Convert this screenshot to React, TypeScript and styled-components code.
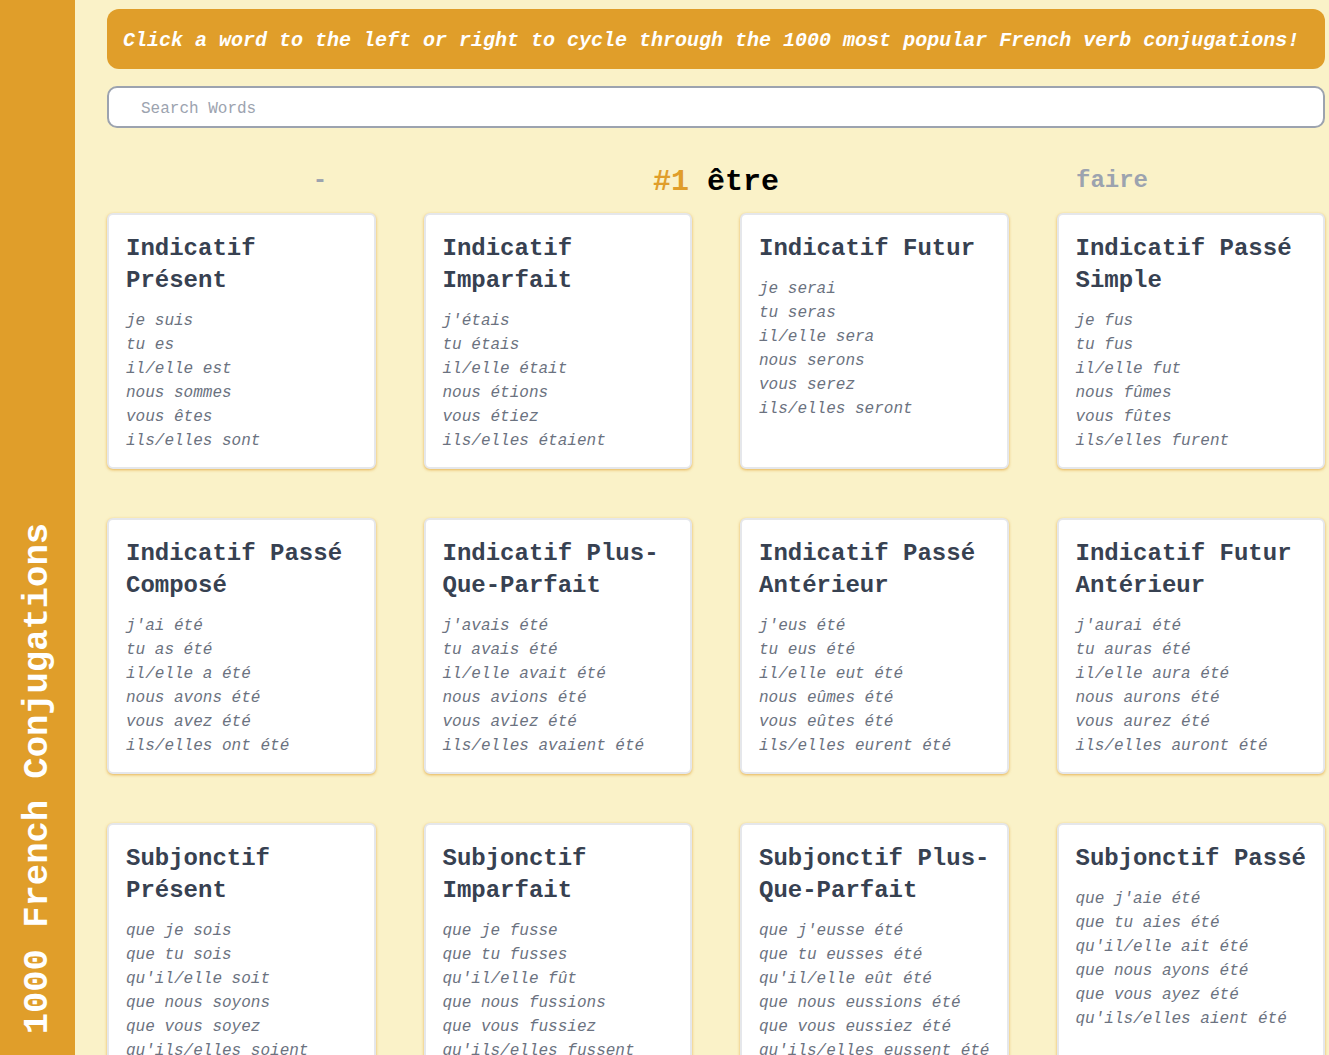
import React from "react";
import styled, { createGlobalStyle } from "styled-components";

const Global = createGlobalStyle`
  html, body { margin: 0; padding: 0; overflow: hidden; }
  body { font-family: "Liberation Mono", "Courier New", monospace; background: #faf2c8; }
  * { box-sizing: border-box; }
`;

const Layout = styled.div`
  display: flex;
  height: 100vh;
  overflow: hidden;
`;

const Sidebar = styled.aside`
  flex: 0 0 75px;
  background: #e09e2a;
  display: flex;
  align-items: flex-end;
  justify-content: center;
  padding-bottom: 21px;
`;

const SideTitle = styled.h1`
  margin: 0;
  writing-mode: vertical-rl;
  transform: rotate(180deg);
  color: #ffffff;
  font-size: 35.5px;
  line-height: 40px;
  font-weight: 700;
  white-space: nowrap;
`;

const Main = styled.main`
  flex: 1;
  min-width: 0;
  padding: 9px 4px 0 32px;
  overflow: hidden;
`;

const Banner = styled.div`
  background: #e09e2a;
  border-radius: 12px;
  padding: 18px 16px 14px;
  color: #ffffff;
  font-size: 20px;
  line-height: 28px;
  font-weight: 700;
  font-style: italic;
  white-space: nowrap;
`;

const Search = styled.input`
  display: block;
  width: 100%;
  margin-top: 17px;
  height: 42px;
  border: 2px solid #9ca3af;
  border-radius: 10px;
  background: #ffffff;
  padding: 3px 0 0 32px;
  font-family: "Liberation Mono", "Courier New", monospace;
  font-size: 16px;
  color: #374151;
  outline: none;
  &::placeholder { color: #9ca3af; }
`;

const WordRow = styled.div`
  display: grid;
  grid-template-columns: repeat(3, 1fr);
  align-items: center;
  padding: 0 15px;
  margin: 36px 0 13px;
  height: 36px;
`;

const SideWord = styled.button`
  background: none;
  border: none;
  padding: 0;
  justify-self: center;
  font-family: "Liberation Mono", "Courier New", monospace;
  font-size: 24px;
  line-height: 32px;
  font-weight: 700;
  color: #9ca3af;
  cursor: pointer;
  margin-top: -3px;
`;

const Current = styled.h2`
  margin: 0;
  justify-self: center;
  font-size: 30px;
  line-height: 36px;
  font-weight: 700;
  color: #000000;
`;

const Rank = styled.span`
  color: #e09e2a;
`;

const Grid = styled.div`
  display: grid;
  grid-template-columns: repeat(4, 1fr);
  column-gap: 48px;
  row-gap: 49px;
`;

const Card = styled.section`
  background: #ffffff;
  border: 2px solid #e5e7eb;
  border-radius: 6px;
  box-shadow: 0 1px 3px rgba(224, 158, 42, 0.75);
  padding: 18px 16px 14px 17px;
`;

const CardTitle = styled.h3`
  margin: 0 0 12px;
  font-size: 24px;
  line-height: 32px;
  font-weight: 700;
  color: #374151;
`;

const Forms = styled.ul`
  list-style: none;
  margin: 0;
  padding: 0;
`;

const Form = styled.li`
  font-size: 16px;
  line-height: 24px;
  font-style: italic;
  color: #6b7280;
  white-space: nowrap;
`;

const tenses: { title: string; forms: string[] }[] = [
  { title: "Indicatif Présent", forms: ["je suis", "tu es", "il/elle est", "nous sommes", "vous êtes", "ils/elles sont"] },
  { title: "Indicatif Imparfait", forms: ["j'étais", "tu étais", "il/elle était", "nous étions", "vous étiez", "ils/elles étaient"] },
  { title: "Indicatif Futur", forms: ["je serai", "tu seras", "il/elle sera", "nous serons", "vous serez", "ils/elles seront"] },
  { title: "Indicatif Passé Simple", forms: ["je fus", "tu fus", "il/elle fut", "nous fûmes", "vous fûtes", "ils/elles furent"] },
  { title: "Indicatif Passé Composé", forms: ["j'ai été", "tu as été", "il/elle a été", "nous avons été", "vous avez été", "ils/elles ont été"] },
  { title: "Indicatif Plus-Que-Parfait", forms: ["j'avais été", "tu avais été", "il/elle avait été", "nous avions été", "vous aviez été", "ils/elles avaient été"] },
  { title: "Indicatif Passé Antérieur", forms: ["j'eus été", "tu eus été", "il/elle eut été", "nous eûmes été", "vous eûtes été", "ils/elles eurent été"] },
  { title: "Indicatif Futur Antérieur", forms: ["j'aurai été", "tu auras été", "il/elle aura été", "nous aurons été", "vous aurez été", "ils/elles auront été"] },
  { title: "Subjonctif Présent", forms: ["que je sois", "que tu sois", "qu'il/elle soit", "que nous soyons", "que vous soyez", "qu'ils/elles soient"] },
  { title: "Subjonctif Imparfait", forms: ["que je fusse", "que tu fusses", "qu'il/elle fût", "que nous fussions", "que vous fussiez", "qu'ils/elles fussent"] },
  { title: "Subjonctif Plus-Que-Parfait", forms: ["que j'eusse été", "que tu eusses été", "qu'il/elle eût été", "que nous eussions été", "que vous eussiez été", "qu'ils/elles eussent été"] },
  { title: "Subjonctif Passé", forms: ["que j'aie été", "que tu aies été", "qu'il/elle ait été", "que nous ayons été", "que vous ayez été", "qu'ils/elles aient été"] },
];

export default function App() {
  return (
    <Layout>
      <Global />
      <Sidebar>
        <SideTitle>1000 French Conjugations</SideTitle>
      </Sidebar>
      <Main>
        <Banner>
          Click a word to the left or right to cycle through the 1000 most popular French verb conjugations!
        </Banner>
        <Search placeholder="Search Words" />
        <WordRow>
          <SideWord>-</SideWord>
          <Current>
            <Rank>#1</Rank> être
          </Current>
          <SideWord>faire</SideWord>
        </WordRow>
        <Grid>
          {tenses.map((t) => (
            <Card key={t.title}>
              <CardTitle>{t.title}</CardTitle>
              <Forms>
                {t.forms.map((f) => (
                  <Form key={f}>{f}</Form>
                ))}
              </Forms>
            </Card>
          ))}
        </Grid>
      </Main>
    </Layout>
  );
}
